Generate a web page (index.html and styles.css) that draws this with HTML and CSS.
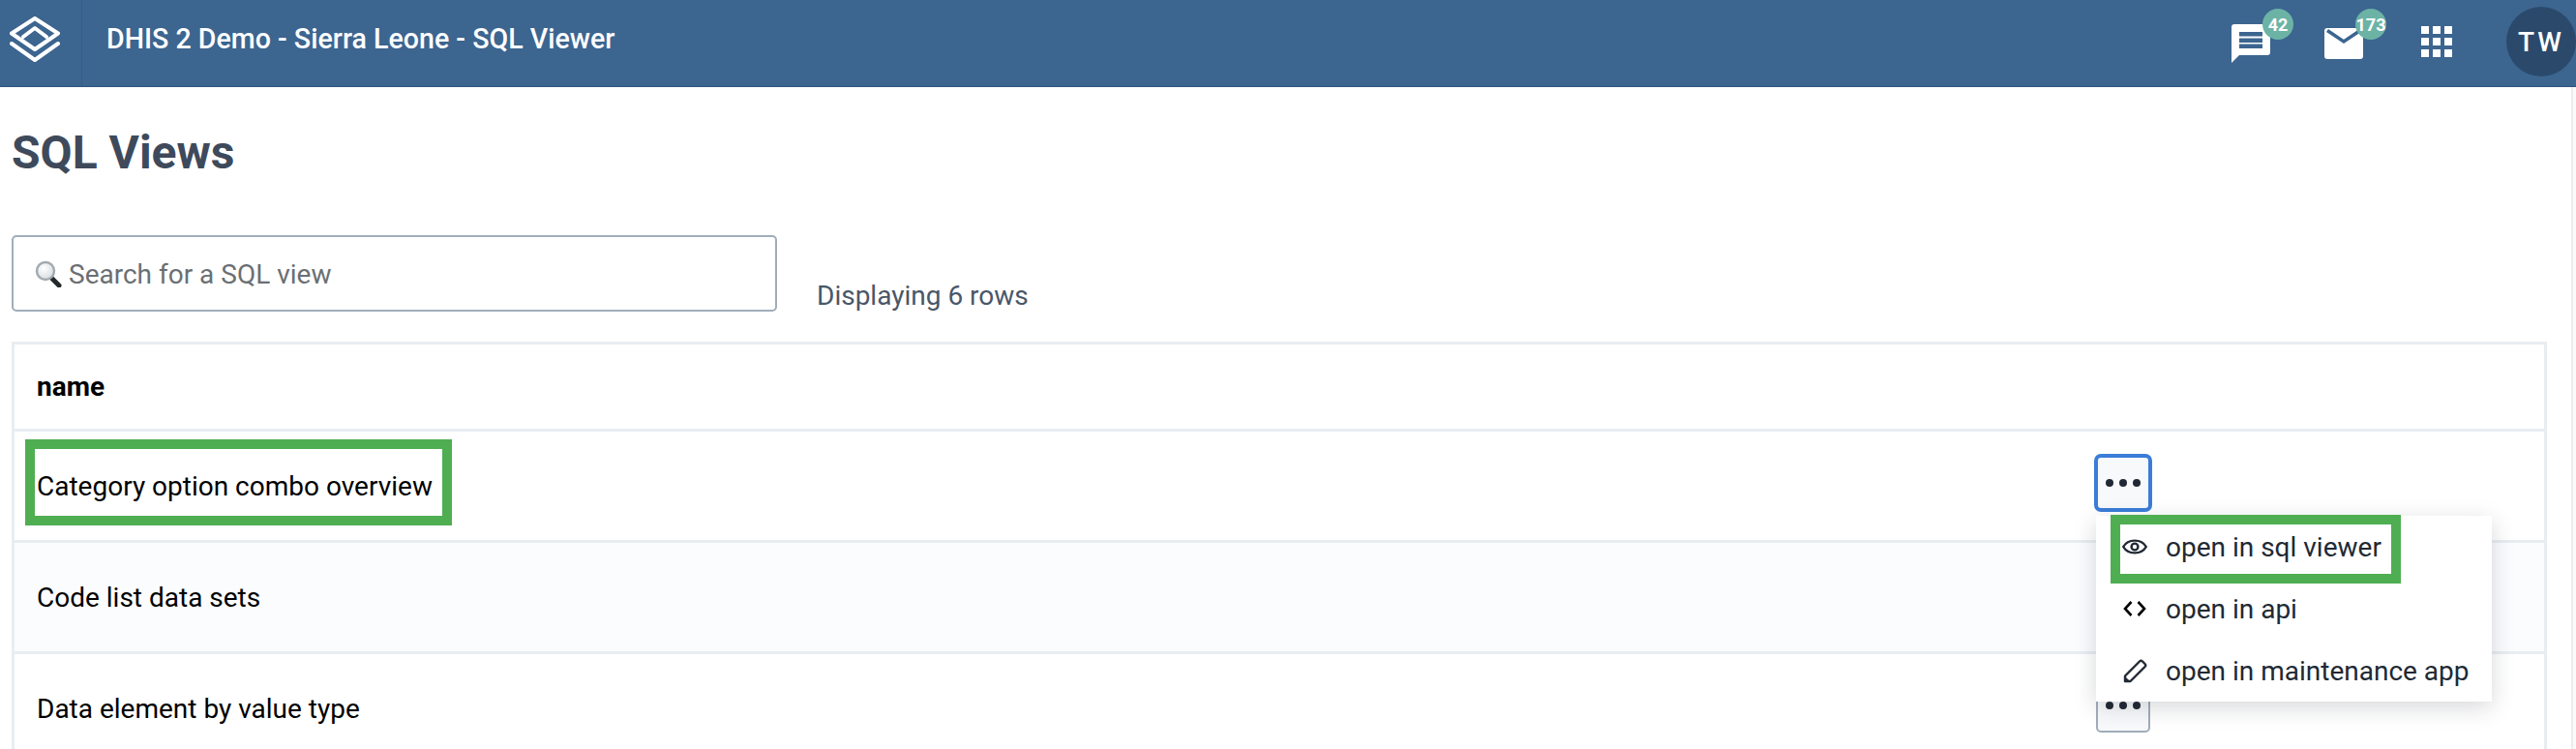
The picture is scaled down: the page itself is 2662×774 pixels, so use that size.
FILE: index.html
```html
<!DOCTYPE html>
<html>
    <head>
        <title>SQL Views</title>
        <link rel="stylesheet" href="styles.css">
    </head>
    <body>

        <header class="topbar">
            <div class="logo">
                <svg width="52" height="47" viewBox="0 0 52 47" fill="none" stroke="#fff" stroke-width="4" stroke-linejoin="round" stroke-linecap="round">
                    <path d="M26 2 L50 17.5 L26 34 L2 17.5 Z"/>
                    <path d="M14 21 L26 12 L38 21"/>
                    <path d="M2 28 L26 45 L50 28"/>
                </svg>
            </div>
            <div class="apptitle">DHIS 2 Demo - Sierra Leone - SQL Viewer</div>

            <div class="topicons">
                <div class="topicon message">
                    <svg width="40" height="40" viewBox="0 0 40 40">
                        <path d="M3 0 H37 Q40 0 40 3 V29 Q40 32 37 32 H8 L0 40 V3 Q0 0 3 0 Z" fill="#fff"/>
                        <rect x="8" y="8" width="24" height="4.5" fill="#3c6590"/>
                        <rect x="8" y="14.5" width="24" height="4.5" fill="#3c6590"/>
                        <rect x="8" y="20.5" width="24" height="4.5" fill="#3c6590"/>
                    </svg>
                    <span class="badge badge-message">42</span>
                </div>
                <div class="topicon mail">
                    <svg width="40" height="32" viewBox="0 0 40 32">
                        <rect width="40" height="32" rx="3" fill="#fff"/>
                        <path d="M3 2.5 L20 14 L37 2.5" fill="none" stroke="#3c6590" stroke-width="3.5"/>
                    </svg>
                    <span class="badge badge-mail">173</span>
                </div>
                <div class="topicon apps">
                    <svg width="32" height="32" viewBox="0 0 32 32" fill="#fff">
                        <rect width="8" height="8"/><rect x="12" width="8" height="8"/><rect x="24" width="8" height="8"/>
                        <rect y="12" width="8" height="8"/><rect x="12" y="12" width="8" height="8"/><rect x="24" y="12" width="8" height="8"/>
                        <rect y="24" width="8" height="8"/><rect x="12" y="24" width="8" height="8"/><rect x="24" y="24" width="8" height="8"/>
                    </svg>
                </div>
                <div class="avatar">TW</div>
            </div>
        </header>

        <div class="page">
            <main class="content">
                <h1 class="pagetitle">SQL Views</h1>

                <div class="searchrow">
                    <label class="search">
                        <svg width="28" height="28" viewBox="0 0 28 28">
                            <defs>
                                <radialGradient id="glass" cx="0.4" cy="0.35" r="0.7">
                                    <stop offset="0" stop-color="#ffffff"/>
                                    <stop offset="1" stop-color="#d5dbe0"/>
                                </radialGradient>
                            </defs>
                            <path d="M17 18 L25 26" stroke="#23282c" stroke-width="5" stroke-linecap="round"/>
                            <circle cx="11" cy="11" r="9" fill="url(#glass)" stroke="#a3aab0" stroke-width="2.4"/>
                        </svg>
                        <input type="text" placeholder="Search for a SQL view">
                    </label>
                    <span class="rowcount">Displaying 6 rows</span>
                </div>

                <table class="views">
                    <thead>
                        <tr>
                            <th>name</th>
                            <th></th>
                        </tr>
                    </thead>
                    <tbody>
                        <tr>
                            <td><span class="marked marked-name">Category option combo overview</span></td>
                            <td class="actions">
                                <div class="dropdown">
                                    <button class="dots focused"><i></i><i></i><i></i></button>
                                    <ul class="menu">
                                        <li class="marked-item">
                                            <svg width="26" height="26" viewBox="0 0 26 26" fill="none" stroke="#212934" stroke-width="2.4">
                                                <path d="M1.2 13 C6 4.5 20 4.5 24.8 13 C20 21.5 6 21.5 1.2 13 Z"/>
                                                <circle cx="13" cy="13" r="3.4"/>
                                            </svg>
                                            <span>open in sql viewer</span>
                                        </li>
                                        <li>
                                            <svg width="26" height="26" viewBox="0 0 26 26" fill="none" stroke="#000" stroke-width="2.6">
                                                <path d="M9.5 6 L3 13 L9.5 20"/>
                                                <path d="M16.5 6 L23 13 L16.5 20"/>
                                            </svg>
                                            <span>open in api</span>
                                        </li>
                                        <li>
                                            <svg width="26" height="26" viewBox="0 0 26 26" fill="none" stroke="#212934" stroke-width="2.4" stroke-linejoin="round">
                                                <path d="M3 24 V18.5 L18 3.5 Q19.5 2 21 3.5 L23.5 6 Q25 7.5 23.5 9 L8.5 24 Z"/>
                                                <path d="M2 25 V18 L9 25 Z" fill="#212934" stroke="none"/>
                                            </svg>
                                            <span>open in maintenance app</span>
                                        </li>
                                    </ul>
                                </div>
                            </td>
                        </tr>
                        <tr class="alt">
                            <td>Code list data sets</td>
                            <td class="actions"><button class="dots"><i></i><i></i><i></i></button></td>
                        </tr>
                        <tr>
                            <td>Data element by value type</td>
                            <td class="actions"><button class="dots"><i></i><i></i><i></i></button></td>
                        </tr>
                    </tbody>
                </table>
            </main>
            <div class="scrolltrack"></div>
        </div>

    </body>
</html>
```

FILE: styles.css
```css
html, body{
    height: 774px;
    overflow: hidden;
}

body{
    font-family: Roboto, "Liberation Sans", sans-serif;
    background-color: #fff;
    color: #000;
    margin: 0;
    padding: 0;
}

/* top bar */
.topbar{
    height: 89px;
    background-color: #3c6590;
    border-bottom: 1px solid #31547a;
    color: #fff;

    display: flex;
    align-items: center;
}

.logo{
    width: 85px;
    height: 89px;
    border-right: 1px solid #365d87;
    box-sizing: border-box;
    padding: 17px 0 0 10px;
}

.logo svg{
    display: block;
}

.apptitle{
    font-size: 28.6px;
    font-weight: 500;
    margin-left: 25px;
    margin-top: -10px;
}

.topicons{
    margin-left: auto;
    display: flex;
    align-items: flex-start;
    height: 89px;
}

.topicon{
    position: relative;
}

.topicon svg{
    display: block;
}

.topicon.message{
    margin-top: 25px;
}

.topicon.mail{
    margin-top: 29px;
    margin-left: 56px;
}

.topicon.apps{
    margin-top: 27px;
    margin-left: 60px;
}

.badge{
    width: 32px;
    height: 32px;
    background-color: #6cb3a6;
    border-radius: 50%;
    color: #fff;
    font-size: 18px;
    font-weight: 700;

    position: absolute;
    left: 32px;

    display: flex;
    justify-content: center;
    align-items: center;
}

.badge-message{
    top: -16px;
}

.badge-mail{
    top: -20px;
}

.avatar{
    width: 72px;
    height: 72px;
    background-color: #2b4a6b;
    border-radius: 50%;
    font-size: 28px;
    font-weight: 500;
    letter-spacing: 3px;

    margin-top: 7px;
    margin-left: 56px;

    display: flex;
    justify-content: center;
    align-items: center;
}

/* page */
.page{
    display: flex;
    height: 684px;
}

.content{
    flex: 1;
    padding: 0 25px 0 12px;
}

.scrolltrack{
    width: 3px;
    background-color: #fafafa;
    border-left: 2px solid #ececec;
}

.pagetitle{
    font-size: 48px;
    font-weight: 700;
    color: #3e4a5b;
    line-height: 58px;
    margin: 39px 0 0;
}

.searchrow{
    display: flex;
    align-items: flex-end;
    margin-top: 56px;
}

.search{
    width: 791px;
    height: 79px;
    box-sizing: border-box;
    border: 2px solid #a0adba;
    border-radius: 5px;
    padding-left: 22px;

    display: flex;
    align-items: center;
}

.search input{
    flex: 1;
    border: 0;
    outline: 0;
    background: none;
    font-family: inherit;
    font-size: 28px;
    color: #6b6f73;
    margin: 2px 0 0 7px;
    padding: 0;
}

.search input::placeholder{
    color: #6b6f73;
    opacity: 1;
}

.rowcount{
    font-size: 28px;
    color: #4a5768;
    margin-left: 41px;
}

/* table */
.views{
    width: 100%;
    border-collapse: collapse;
    border: 3px solid #e8edf2;
    margin-top: 31px;
    font-size: 28px;
}

.views th{
    height: 87px;
    padding: 0 0 0 23px;
    font-weight: 700;
    text-align: left;
}

.views td{
    height: 112px;
    padding: 0 0 0 23px;
    border-top: 3px solid #e8edf2;
}

.views .alt td{
    background-color: #fbfcfe;
}

.views td.actions{
    width: 463px;
    padding: 0;
}

.dots{
    width: 56px;
    height: 56px;
    background-color: #f8f9fb;
    border: 2px solid #a0adba;
    border-radius: 5px;
    padding: 0;
    margin-top: -6px;

    display: flex;
    justify-content: center;
    align-items: center;
    gap: 6px;
}

.dots i{
    width: 8px;
    height: 8px;
    background-color: #212934;
    border-radius: 50%;
}

.dots.focused{
    border-color: #3b7dd8;
    box-shadow: 0 0 0 2px #3b7dd8;
}

.dropdown{
    position: relative;
}

.menu{
    width: 409px;
    background-color: #fff;
    box-shadow: 0 6px 22px rgba(33,41,52,0.18);
    color: #212934;
    font-size: 28px;
    list-style: none;
    margin: 0;
    padding: 0;

    position: absolute;
    top: 62px;
    left: 0;
    z-index: 2;
}

.menu li{
    height: 64px;
    display: flex;
    align-items: center;
    position: relative;
}

.menu li svg{
    margin-left: 27px;
    margin-right: 19px;
}

/* green annotation boxes */
.marked{
    position: relative;
}

.marked-name::after{
    content: "";
    border: 10px solid #4fae52;
    position: absolute;
    left: -12px;
    right: -20px;
    top: -32px;
    bottom: -24px;
}

.marked-item::after{
    content: "";
    width: 280px;
    height: 51px;
    border: 10px solid #4fae52;
    position: absolute;
    left: 15px;
    top: -1px;
}
```
